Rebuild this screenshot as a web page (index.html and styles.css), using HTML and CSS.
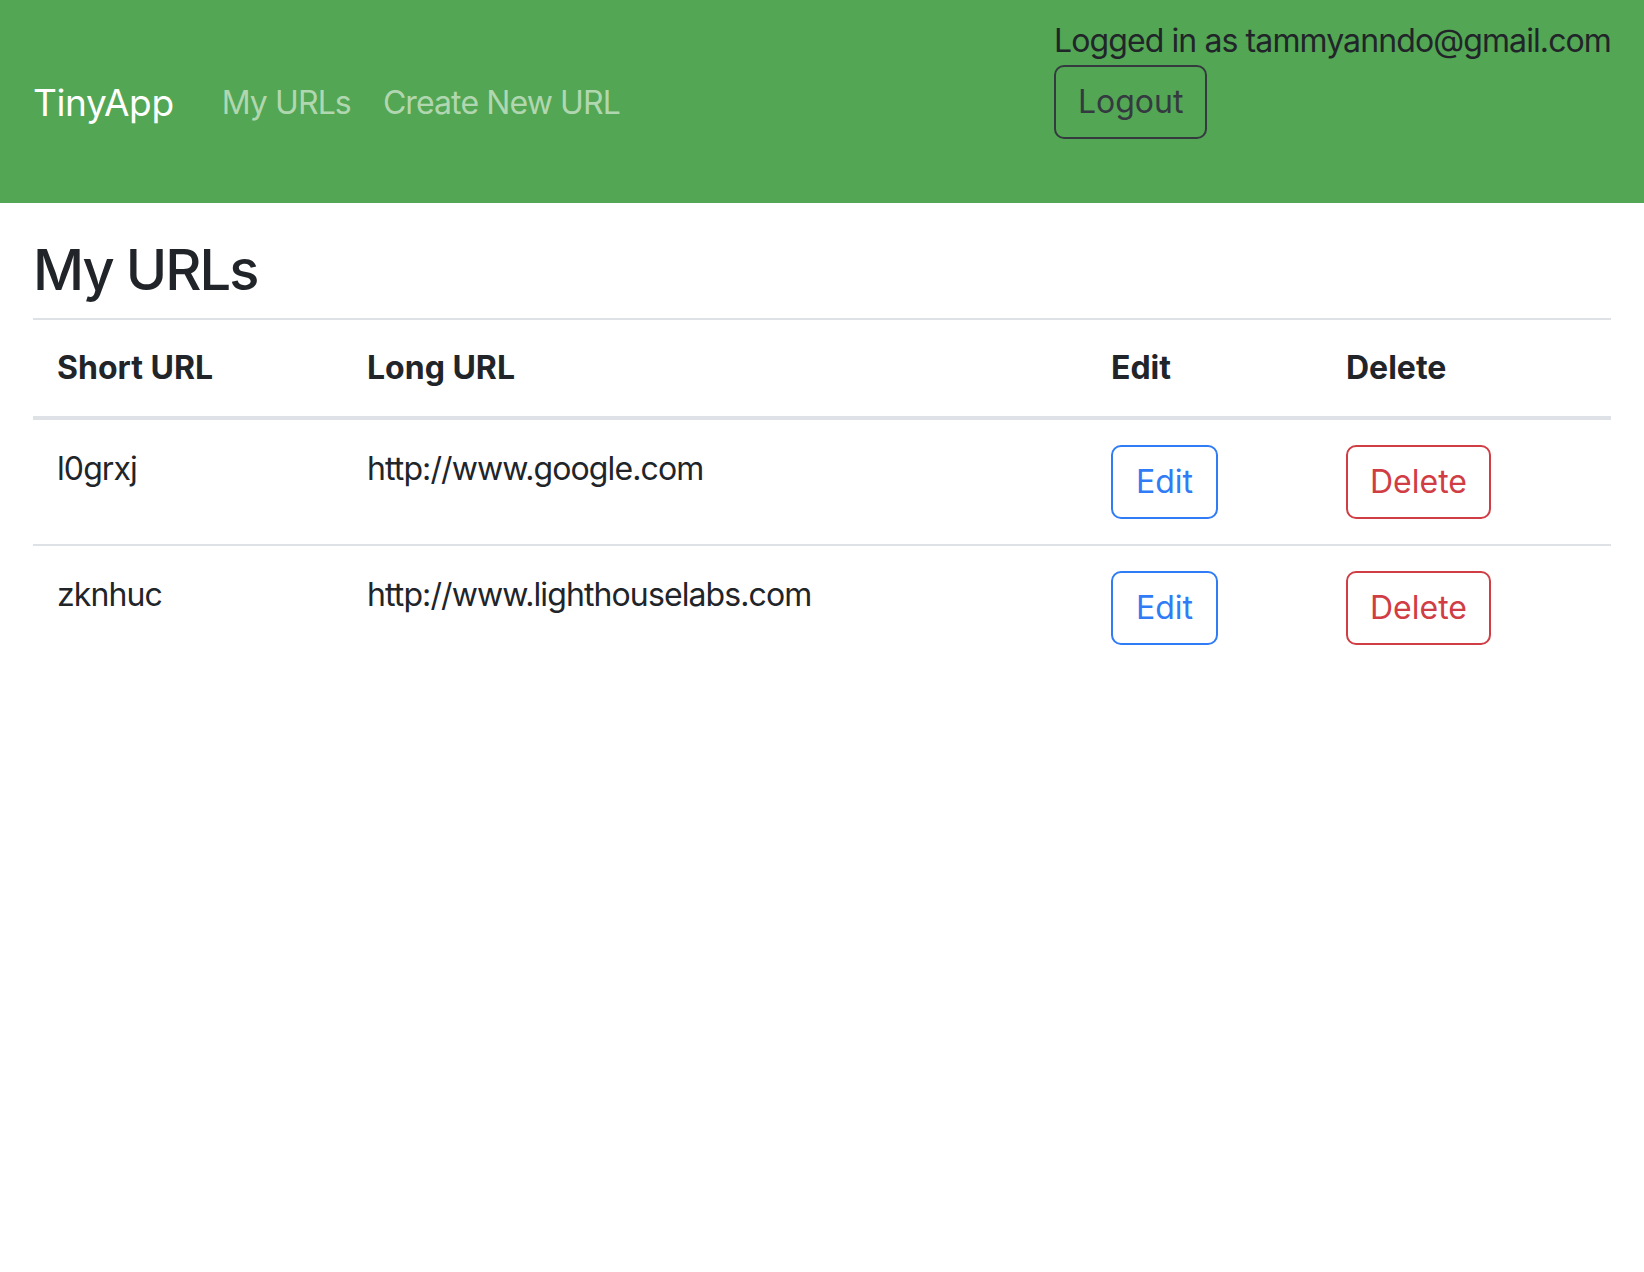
FILE: index.html
```html
<!DOCTYPE html>
<html lang="en">
<head>
<meta charset="utf-8">
<title>TinyApp - My URLs</title>
<link rel="stylesheet" href="styles.css">
</head>
<body>
<nav class="navbar">
  <div class="nav-left">
    <a class="brand" href="#">TinyApp</a>
    <a class="nav-link" href="#">My URLs</a>
    <a class="nav-link" href="#">Create New URL</a>
  </div>
  <div class="nav-right">
    <div class="user">Logged in as tammyanndo@gmail.com</div>
    <button class="btn btn-dark-outline">Logout</button>
  </div>
</nav>
<main class="container">
  <h1 class="title">My URLs</h1>
  <table class="urls">
    <colgroup>
      <col class="c1"><col class="c2"><col class="c3"><col class="c4">
    </colgroup>
    <thead>
      <tr><th>Short URL</th><th>Long URL</th><th>Edit</th><th>Delete</th></tr>
    </thead>
    <tbody>
      <tr>
        <td>l0grxj</td>
        <td>http://www.google.com</td>
        <td><button class="btn btn-blue">Edit</button></td>
        <td><button class="btn btn-red">Delete</button></td>
      </tr>
      <tr>
        <td>zknhuc</td>
        <td>http://www.lighthouselabs.com</td>
        <td><button class="btn btn-blue">Edit</button></td>
        <td><button class="btn btn-red">Delete</button></td>
      </tr>
    </tbody>
  </table>
</main>
</body>
</html>
```

FILE: styles.css
```css
html, body {
  margin: 0;
  padding: 0;
  background: #ffffff;
}
body {
  font-family: Inter, "Noto Sans", "Liberation Sans", sans-serif;
  font-size: 32px;
  line-height: 48px;
  letter-spacing: -0.028em;
  color: #212529;
}
.navbar {
  display: flex;
  align-items: flex-start;
  height: 203px;
  box-sizing: border-box;
  padding: 0 33px 0 33px;
  background: #53a653;
}
.nav-left {
  display: flex;
  align-items: center;
  height: 196px;
  padding-top: 5px;
}
.brand {
  font-size: 37px;
  letter-spacing: -0.01em;
  color: #ffffff;
  text-decoration: none;
  margin-right: 32px;
}
.nav-link {
  padding: 0 16px;
  color: #b1d7b1;
  text-decoration: none;
}
.nav-right {
  margin-left: auto;
  padding-top: 17px;
  display: flex;
  flex-direction: column;
  align-items: flex-start;
}
.user {
  color: #212529;
}
.btn {
  font-family: inherit;
  font-size: 32px;
  line-height: 48px;
  letter-spacing: normal;
  background: transparent;
  border: 2px solid;
  border-radius: 10px;
  padding: 11px 23px;
  cursor: pointer;
}
.btn-dark-outline {
  color: #343a40;
  border-color: #343a40;
  padding: 11px 22px;
}
.btn-blue {
  color: #2f7cf6;
  border-color: #2f7cf6;
}
.btn-red {
  color: #d03d44;
  border-color: #d03d44;
  padding: 11px 22px;
}
.container {
  padding: 0 33px;
}
.title {
  font-size: 56px;
  line-height: 67px;
  font-weight: 500;
  letter-spacing: -0.035em;
  margin: 34px 0 0 0;
  padding-bottom: 14px;
  border-bottom: 2px solid #dee2e6;
}
.urls {
  width: 100%;
  border-collapse: collapse;
  table-layout: fixed;
}
.c1 { width: 310px; }
.c2 { width: 744px; }
.c3 { width: 235px; }
.urls th {
  text-align: left;
  font-weight: 700;
  letter-spacing: normal;
  padding: 24px 24px;
  border-bottom: 4px solid #dee2e6;
}
.urls td {
  vertical-align: top;
  padding: 25px 24px;
  border-bottom: 2px solid #dee2e6;
}
.urls tbody tr:last-child td {
  border-bottom: none;
}
```
